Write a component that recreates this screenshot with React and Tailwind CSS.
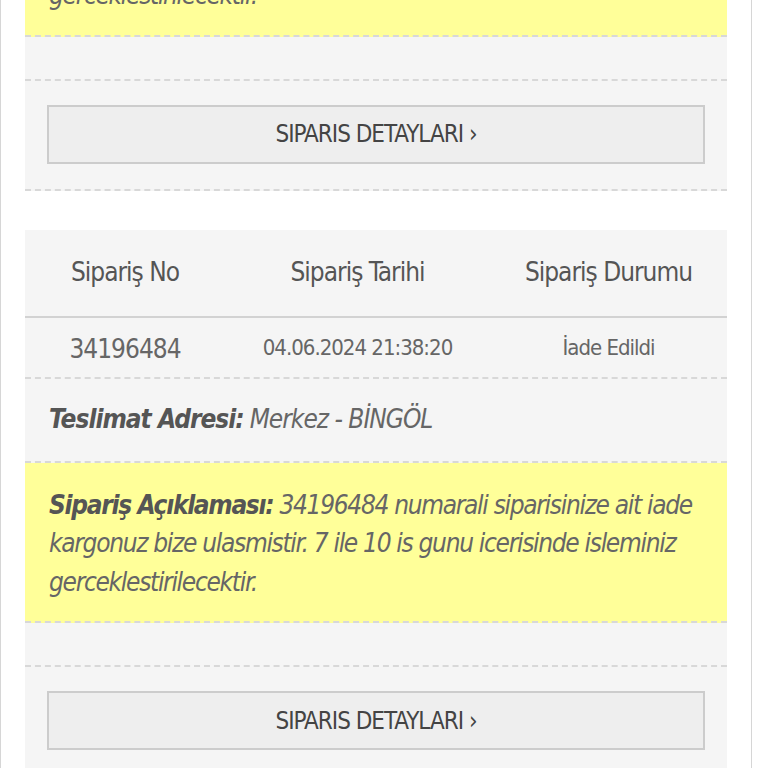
import React from "react";

const orders = [
  {
    no: "34196484",
    date: "04.06.2024 21:38:20",
    status: "İade Edildi",
    address: "Merkez - BİNGÖL",
  },
  {
    no: "34196484",
    date: "04.06.2024 21:38:20",
    status: "İade Edildi",
    address: "Merkez - BİNGÖL",
  },
];

function OrderCard({ order }) {
  return (
    <div className="bg-[#f5f5f5] text-[#555]">
      <div className="grid grid-cols-[200px_265px_1fr] h-[88px] items-center text-center text-[26px] font-medium text-[#555] border-b-2 border-[#d2d2d2]">
        <div>Sipariş No</div>
        <div>Sipariş Tarihi</div>
        <div>Sipariş Durumu</div>
      </div>
      <div className="grid grid-cols-[200px_265px_1fr] h-[61px] items-center text-center text-[#666] border-b-2 border-dashed border-[#d8d8d8]">
        <div className="text-[26px] pt-1">{order.no}</div>
        <div className="text-[22px]">{order.date}</div>
        <div className="text-[22px]">{order.status}</div>
      </div>
      <div className="h-[84px] flex items-center px-6 text-[26px] italic text-[#666] border-b-2 border-dashed border-[#d8d8d8]">
        <span className="font-bold text-[#555] mr-1.5">Teslimat Adresi:</span>
        {order.address}
      </div>
      <div className="bg-[#ffff99] px-6 pt-[23px] pb-[20px] text-[26px] leading-[38.5px] tracking-[-1.3px] italic text-[#666] border-b-2 border-dashed border-[#d8d8d8]">
        <span className="font-bold text-[#555]">Sipariş Açıklaması:</span>{" "}
        {order.no} numarali siparisinize ait iade kargonuz bize ulasmistir. 7
        ile 10 is gunu icerisinde isleminiz gerceklestirilecektir.
      </div>
      <div className="h-[44px] border-b-2 border-dashed border-[#d8d8d8]"></div>
      <div className="px-[22px] pt-[24px] pb-[25px] border-b-2 border-dashed border-[#d8d8d8]">
        <button className="w-full h-[59px] bg-[#eeeeee] border-2 border-[#cccccc] text-[24px] text-[#444] flex items-center justify-center">
          SIPARIS DETAYLARI ›
        </button>
      </div>
    </div>
  );
}

export default function App() {
  return (
    <div
      className="w-[768px] h-[768px] overflow-hidden bg-white tracking-[-1px]"
      style={{ fontFamily: '"Liberation Sans Narrow", "DejaVu Sans Condensed", "Roboto", sans-serif' }}
    >
      <div className="w-[752px] border-x border-[#d6d6d6] px-6 -mt-[357px] flex flex-col gap-[39px] pb-10">
        {orders.map((o, i) => (
          <OrderCard key={i} order={o} />
        ))}
      </div>
    </div>
  );
}
